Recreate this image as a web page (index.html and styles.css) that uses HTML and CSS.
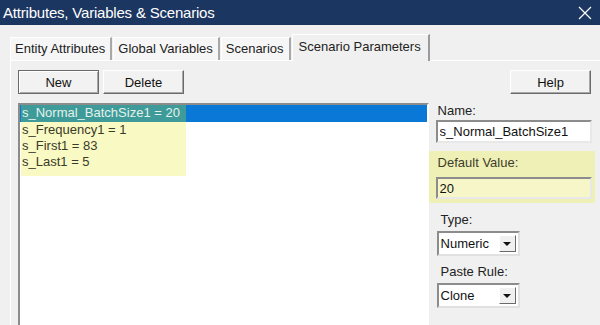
FILE: index.html
```html
<!DOCTYPE html>
<html>
<head>
    <title>Attributes, Variables &amp; Scenarios</title>
    <link rel="stylesheet" href="styles.css">
</head>
<body>

<div class="window">
    <!-- Title bar -->
    <div class="titlebar">
        <span class="title">Attributes, Variables &amp; Scenarios</span>
        <svg class="close" width="14" height="14" viewBox="0 0 14 14">
            <path d="M1 1 L13 13 M13 1 L1 13" stroke="#ffffff" stroke-width="1.2" fill="none"/>
        </svg>
    </div>

    <!-- Tab strip -->
    <div class="tabs">
        <div class="tab">Entity Attributes</div>
        <div class="tab">Global Variables</div>
        <div class="tab">Scenarios</div>
        <div class="tab active">Scenario Parameters</div>
    </div>

    <div class="panel">
        <div class="toolbar">
            <button class="btn default">New</button>
            <button class="btn">Delete</button>
            <button class="btn help">Help</button>
        </div>

        <div class="content">
            <!-- Parameter list -->
            <div class="listbox">
                <div class="row selected"><span class="cell">s_Normal_BatchSize1 = 20</span></div>
                <div class="row"><span class="cell">s_Frequency1 = 1</span></div>
                <div class="row"><span class="cell">s_First1 = 83</span></div>
                <div class="row"><span class="cell">s_Last1 = 5</span></div>
                <div class="row-end"></div>
            </div>

            <!-- Details of the selected parameter -->
            <div class="side">
                <label class="field-label">Name:</label>
                <input class="text-input" type="text" value="s_Normal_BatchSize1">

                <div class="highlight">
                    <label class="field-label">Default Value:</label>
                    <input class="text-input value" type="text" value="20">
                </div>

                <label class="field-label indent">Type:</label>
                <div class="combo">
                    <span class="combo-text">Numeric</span>
                    <span class="combo-btn"><span class="arrow"></span></span>
                </div>

                <label class="field-label indent gap">Paste Rule:</label>
                <div class="combo">
                    <span class="combo-text">Clone</span>
                    <span class="combo-btn"><span class="arrow"></span></span>
                </div>
            </div>
        </div>
    </div>
</div>

</body>
</html>
```

FILE: styles.css
```css
body {
    margin: 0;
    background-color: #f0f0f0;
    font-family: "Liberation Sans", Arial, sans-serif;
    font-size: 13px;
    color: #222;
    overflow: hidden;
}
.titlebar {
    height: 25px;
    background-color: #1b3660;
    color: #ffffff;
    display: flex;
    align-items: center;
    justify-content: space-between;
    padding: 0 8px 0 3px;
}
.title {
    font-size: 15px;
    letter-spacing: -0.2px;
}
.tabs {
    display: flex;
    align-items: flex-end;
    height: 27px;
    margin-top: 8px;
    padding-left: 10px;
}
.tab {
    height: 22px;
    line-height: 22px;
    padding: 0 5px 0 4px;
    background-color: #f6f6f6;
    border-top: 1px solid #ffffff;
    border-left: 1px solid #ffffff;
    border-right: 2px solid #a8a8a8;
    margin-right: 1px;
}
.tab.active {
    height: 26px;
    line-height: 24px;
    padding: 0 7px 0 6px;
    background-color: #f0f0f0;
    border-right: 2px solid #9a9a9a;
    margin-bottom: -1px;
    position: relative;
}
.panel {
    margin-left: 10px;
    border-top: 1px solid #ffffff;
    border-left: 1px solid #ffffff;
    padding: 9px 5px 0 7px;
}
.toolbar {
    display: flex;
    height: 24px;
    margin-right: 4px;
}
.btn {
    font-family: "Liberation Sans", Arial, sans-serif;
    font-size: 13px;
    color: #111;
    width: 81px;
    height: 24px;
    background-color: #f2f2f2;
    border: 1px solid;
    border-color: #ffffff #6a6a6a #6a6a6a #ffffff;
    box-shadow: inset -1px -1px 0 #a8a8a8;
    padding: 0;
    margin-right: 4px;
}
.btn.default {
    border-color: #6a6a6a;
    box-shadow: inset 1px 1px 0 #ffffff, inset -1px -1px 0 #a8a8a8;
}
.btn.help {
    margin-left: auto;
    margin-right: 0;
}
.content {
    display: flex;
    margin-top: 9px;
}
.listbox {
    width: 408px;
    height: 230px;
    background-color: #ffffff;
    border: 2px solid;
    border-color: #8c8c8c #ffffff #ffffff #8c8c8c;
}
.row {
    height: 16px;
    line-height: 16px;
    display: flex;
}
.cell {
    width: 164px;
    margin-left: 1px;
    padding-left: 1px;
    background-color: #f9f9c3;
    color: #3a3a2a;
}
.row.selected {
    background-color: #0a78d7;
    height: 17px;
}
.row.selected .cell {
    background-color: #3e9b9a;
    color: #e4f2ea;
}
.row-end {
    width: 165px;
    margin-left: 1px;
    height: 6px;
    background-color: #f9f9c3;
}
.side {
    width: 167px;
    display: flex;
    flex-direction: column;
    align-items: flex-start;
}
.field-label {
    display: block;
    line-height: 15px;
    padding-left: 9px;
    color: #222;
}
.text-input {
    box-sizing: border-box;
    width: 156px;
    height: 23px;
    margin: 2px 0 0 7px;
    padding: 0 0 0 2px;
    font-family: "Liberation Sans", Arial, sans-serif;
    font-size: 13px;
    color: #111;
    background-color: #ffffff;
    border: 2px solid;
    border-color: #8c8c8c #e8e8e8 #e8e8e8 #8c8c8c;
    outline: none;
}
.highlight {
    box-sizing: border-box;
    width: 166px;
    margin: 8px 0 0 0;
    padding: 4px 0 4px 0;
    background-color: #eff0b6;
}
.highlight .field-label {
    padding-left: 9px;
    color: #3d3d2a;
}
.text-input.value {
    height: 22px;
    margin: 7px 0 0 7px;
    background-color: #f6f6c8;
}
.indent {
    margin-top: 9px;
    padding-left: 12px;
}
.indent.gap {
    margin-top: 8px;
}
.combo {
    box-sizing: border-box;
    width: 83px;
    height: 25px;
    margin: 4px 0 0 8px;
    display: flex;
    align-items: center;
    background-color: #ffffff;
    border: 2px solid;
    border-color: #8c8c8c #e0e0e0 #e0e0e0 #8c8c8c;
    padding: 0 2px 0 2px;
}
.combo-text {
    flex: 1;
    color: #111;
}
.combo-btn {
    width: 17px;
    height: 17px;
    box-sizing: border-box;
    background-color: #f0f0f0;
    border: 1px solid;
    border-color: #ffffff #6a6a6a #6a6a6a #ffffff;
    display: flex;
    align-items: center;
    justify-content: center;
}
.arrow {
    width: 0;
    height: 0;
    border-left: 4px solid transparent;
    border-right: 4px solid transparent;
    border-top: 4px solid #111;
}
```
